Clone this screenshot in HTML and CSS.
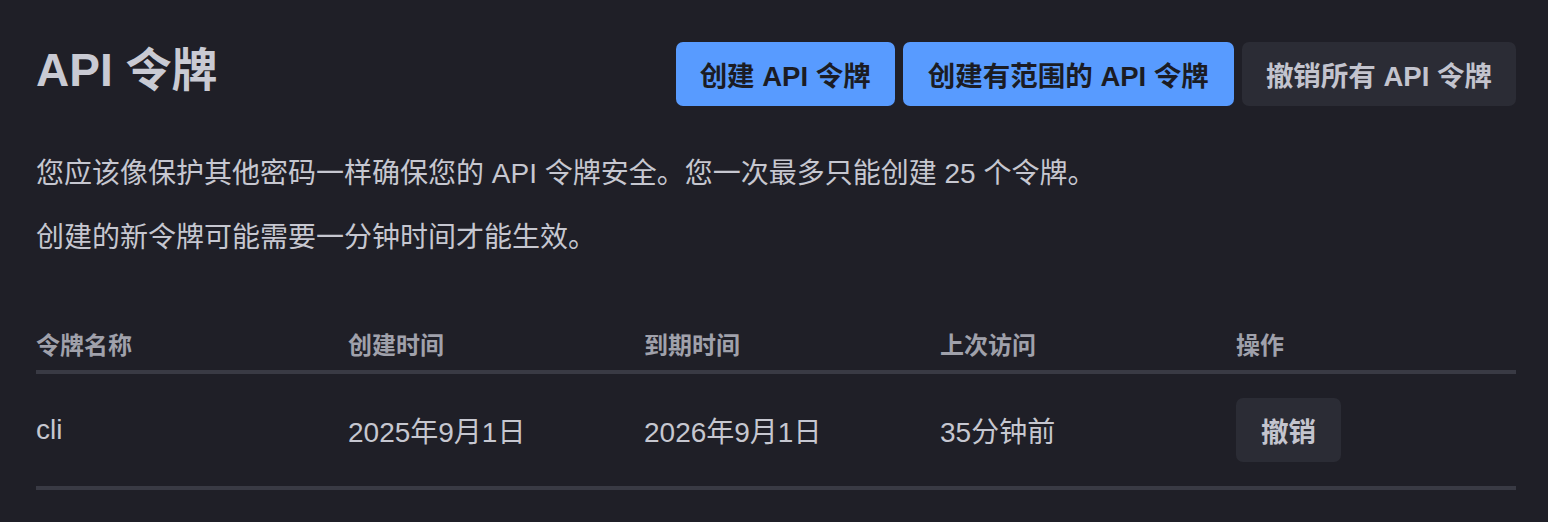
FILE: index.html
```html
<!DOCTYPE html>
<html lang="zh-CN">
<head>
<meta charset="utf-8">
<title>API 令牌</title>
<link rel="stylesheet" href="styles.css">
</head>
<body>
<main class="page">
  <header class="top">
    <h1 class="title">API 令牌</h1>
    <div class="actions">
      <button class="btn btn-primary">创建 API 令牌</button>
      <button class="btn btn-primary btn-wide">创建有范围的 API 令牌</button>
      <button class="btn btn-secondary">撤销所有 API 令牌</button>
    </div>
  </header>
  <p class="text">您应该像保护其他密码一样确保您的 API 令牌安全。您一次最多只能创建 25 个令牌。</p>
  <p class="text">创建的新令牌可能需要一分钟时间才能生效。</p>
  <div class="table">
    <div class="row head">
      <div class="cell">令牌名称</div>
      <div class="cell">创建时间</div>
      <div class="cell">到期时间</div>
      <div class="cell">上次访问</div>
      <div class="cell">操作</div>
    </div>
    <div class="row body">
      <div class="cell">cli</div>
      <div class="cell">2025年9月1日</div>
      <div class="cell">2026年9月1日</div>
      <div class="cell">35分钟前</div>
      <div class="cell"><button class="btn btn-secondary btn-small">撤销</button></div>
    </div>
  </div>
</main>
</body>
</html>
```
FILE: styles.css
```css
html, body {
  margin: 0;
  padding: 0;
  background: #1f1f27;
}

body {
  font-family: "Liberation Sans", "Noto Sans CJK SC", sans-serif;
  color: #c6c7d0;
}

.page {
  padding: 42px 32px 0 36px;
  width: 1480px;
}

.top {
  display: flex;
  justify-content: space-between;
  align-items: center;
  height: 64px;
}

.title {
  margin: 0 0 8px 0;
  font-size: 46px;
  line-height: 56px;
  font-weight: 700;
  color: #c9cad3;
}

.actions {
  display: flex;
  gap: 8px;
}

.btn {
  font-family: "Liberation Sans", "Noto Sans CJK SC", sans-serif;
  font-size: 27.5px;
  font-weight: 600;
  height: 64px;
  padding: 0 24px;
  border: none;
  border-radius: 7px;
  cursor: pointer;
}

.btn-wide {
  padding: 0 25px;
}

.btn-primary {
  background: #589bff;
  color: #1b1c24;
}

.btn-secondary {
  background: #2b2c35;
  color: #c3c4ce;
}

.btn-small {
  padding: 0 25px;
}

.text {
  margin: 0;
  font-size: 28px;
  line-height: 40px;
}

.text:first-of-type {
  margin-top: 48px;
}

.text + .text {
  margin-top: 24px;
}

.table {
  margin-top: 72px;
}

.row {
  display: grid;
  grid-template-columns: 312px 296px 296px 296px 1fr;
  align-items: center;
  border-bottom: 4px solid #393a44;
}

.head .cell {
  font-size: 24px;
  font-weight: 700;
  line-height: 32px;
  color: #a0a1ab;
  padding-bottom: 8px;
}

.body {
  height: 112px;
  font-size: 28px;
}

.body .cell {
  color: #c6c7d0;
}
```
